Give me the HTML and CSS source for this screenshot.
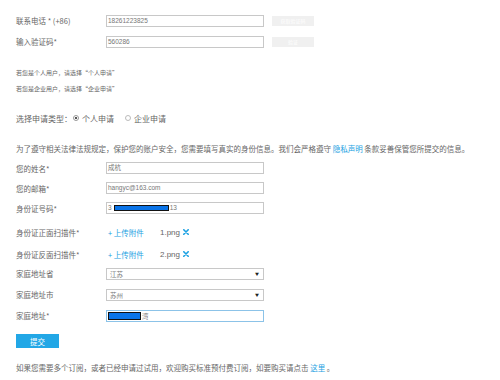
FILE: index.html
```html
<!DOCTYPE html>
<html lang="zh-CN">
  <head>
    <meta charset="UTF-8" />
    <title>申请试用</title>
    <link rel="stylesheet" href="styles.css">
  </head>
  <body>
    <div class="page">
      <div class="verify">
        <div class="row">
          <span class="label">联系电话 * (+86)</span>
          <div class="field">18261223825</div>
          <span class="ghost-btn">获取验证码</span>
        </div>
        <div class="row">
          <span class="label">输入验证码*</span>
          <div class="field">560286</div>
          <span class="ghost-btn">验证</span>
        </div>
      </div>

      <div class="notes">
        <p>若您是个人用户，请选择“个人申请”</p>
        <p>若您是企业用户，请选择“企业申请”</p>
      </div>

      <div class="apply-type">
        <span>选择申请类型：</span>
        <span class="radio checked"></span>
        <span>个人申请</span>
        <span class="radio second"></span>
        <span>企业申请</span>
      </div>

      <p class="intro">为了遵守相关法律法规规定，保护您的账户安全，您需要填写真实的身份信息。我们会严格遵守 <a href="#">隐私声明</a> 条款妥善保管您所提交的信息。</p>

      <div class="info">
        <div class="row">
          <span class="label">您的姓名*</span>
          <div class="field">成杭</div>
        </div>
        <div class="row">
          <span class="label">您的邮箱*</span>
          <div class="field">hangyc@163.com</div>
        </div>
        <div class="row">
          <span class="label">身份证号码*</span>
          <div class="field">3<span class="redact id-redact"></span>13</div>
        </div>
      </div>

      <div class="uploads">
        <div class="row">
          <span class="label">身份证正面扫描件*</span>
          <a class="upload" href="#">+ 上传附件</a>
          <span class="file">1.png</span>
          <svg class="remove" width="6" height="6" viewBox="0 0 6 6"><path d="M0.8 0.8L5.2 5.2M5.2 0.8L0.8 5.2" stroke="#1ba1e2" stroke-width="1.6" stroke-linecap="round"/></svg>
        </div>
        <div class="row">
          <span class="label">身份证反面扫描件*</span>
          <a class="upload" href="#">+ 上传附件</a>
          <span class="file">2.png</span>
          <svg class="remove" width="6" height="6" viewBox="0 0 6 6"><path d="M0.8 0.8L5.2 5.2M5.2 0.8L0.8 5.2" stroke="#1ba1e2" stroke-width="1.6" stroke-linecap="round"/></svg>
        </div>
      </div>

      <div class="address">
        <div class="row">
          <span class="label">家庭地址省</span>
          <div class="field select">江苏<span class="arrow">▼</span></div>
        </div>
        <div class="row">
          <span class="label">家庭地址市</span>
          <div class="field select">苏州<span class="arrow">▼</span></div>
        </div>
        <div class="row">
          <span class="label">家庭地址*</span>
          <div class="field focused"><span class="redact addr-redact"></span>湾</div>
        </div>
      </div>

      <button class="submit">提交</button>

      <p class="footer-note">如果您需要多个订阅，或者已经申请过试用，欢迎购买标准预付费订阅，如要购买请点击 <a href="#">这里</a> 。</p>
    </div>
  </body>
</html>
```

FILE: styles.css
```css
body,
html {
  margin: 0;
  padding: 0;
  background-color: white;
  font-family: "Noto Sans CJK SC", "Liberation Sans", sans-serif;
  color: #666;
}

.page {
  padding: 0 0 0 16px;
  width: 484px;
  height: 380px;
  overflow: hidden;
}

p {
  margin: 0;
}

a {
  color: #1ba1e2;
  text-decoration: none;
}

.row {
  display: flex;
  align-items: center;
  height: 21px;
  font-size: 7.5px;
}

.label {
  width: 90px;
  flex-shrink: 0;
}

.field {
  box-sizing: border-box;
  width: 158px;
  height: 12px;
  border: 1px solid #c8c8c8;
  padding: 0 1px;
  font-family: "Liberation Sans", "Noto Sans CJK SC", sans-serif;
  font-size: 6.5px;
  line-height: 10px;
  color: #777;
  display: flex;
  align-items: center;
}

/* verify rows */
.verify {
  padding-top: 10px;
}

.ghost-btn {
  margin-left: 8px;
  width: 42px;
  height: 10px;
  background-color: #f0f0f0;
  color: white;
  font-size: 5px;
  line-height: 10px;
  text-align: center;
}

.notes {
  margin-top: 13px;
  font-size: 6px;
  line-height: 16px;
}

.apply-type {
  margin-top: 13px;
  height: 16px;
  display: flex;
  align-items: center;
  font-size: 8px;
}

.radio {
  width: 4px;
  height: 4px;
  border: 1px solid #bbb;
  border-radius: 50%;
  margin: 0 3px 0 1px;
  box-sizing: content-box;
}

.radio.checked {
  background: radial-gradient(circle, #555 45%, white 55%);
  border-color: #999;
}

.radio.second {
  margin-left: 11px;
}

.intro {
  margin-top: 15px;
  height: 16px;
  line-height: 16px;
  font-size: 7.5px;
  white-space: nowrap;
}

.info {
  margin-top: 1px;
}

.info .row {
  height: 20px;
}

.redact {
  display: inline-block;
  background-color: #0a74e8;
  border: 1px solid #111;
  box-sizing: border-box;
}

.id-redact {
  width: 55px;
  height: 6px;
  margin: 0 1px 0 2px;
}

.addr-redact {
  width: 33px;
  height: 8px;
  margin: 0 1px 0 0;
}

.uploads {
  margin-top: 4px;
  margin-bottom: -1px;
  display: flex;
  flex-direction: column;
  gap: 2px;
}

.uploads .row {
  height: 20px;
}

.upload {
  margin-left: 2px;
  width: 52px;
}

.file {
  font-family: "Liberation Sans", sans-serif;
  font-size: 8px;
  width: 23px;
}

.remove {
  display: block;
}

.select {
  position: relative;
  font-family: "Noto Sans CJK SC", sans-serif;
  padding-left: 3px;
}

.arrow {
  position: absolute;
  right: 4px;
  top: 0;
  font-size: 4px;
  color: #222;
}

.focused {
  border-color: #8cc3e8;
  font-family: "Noto Sans CJK SC", sans-serif;
}

.submit {
  display: block;
  margin-top: 8px;
  width: 43px;
  height: 14px;
  padding: 0;
  border: none;
  background-color: #22a7e6;
  color: white;
  font-family: "Noto Sans CJK SC", sans-serif;
  font-size: 7.5px;
}

.footer-note {
  margin-top: 12px;
  line-height: 16px;
  font-size: 7.5px;
  white-space: nowrap;
}
```
